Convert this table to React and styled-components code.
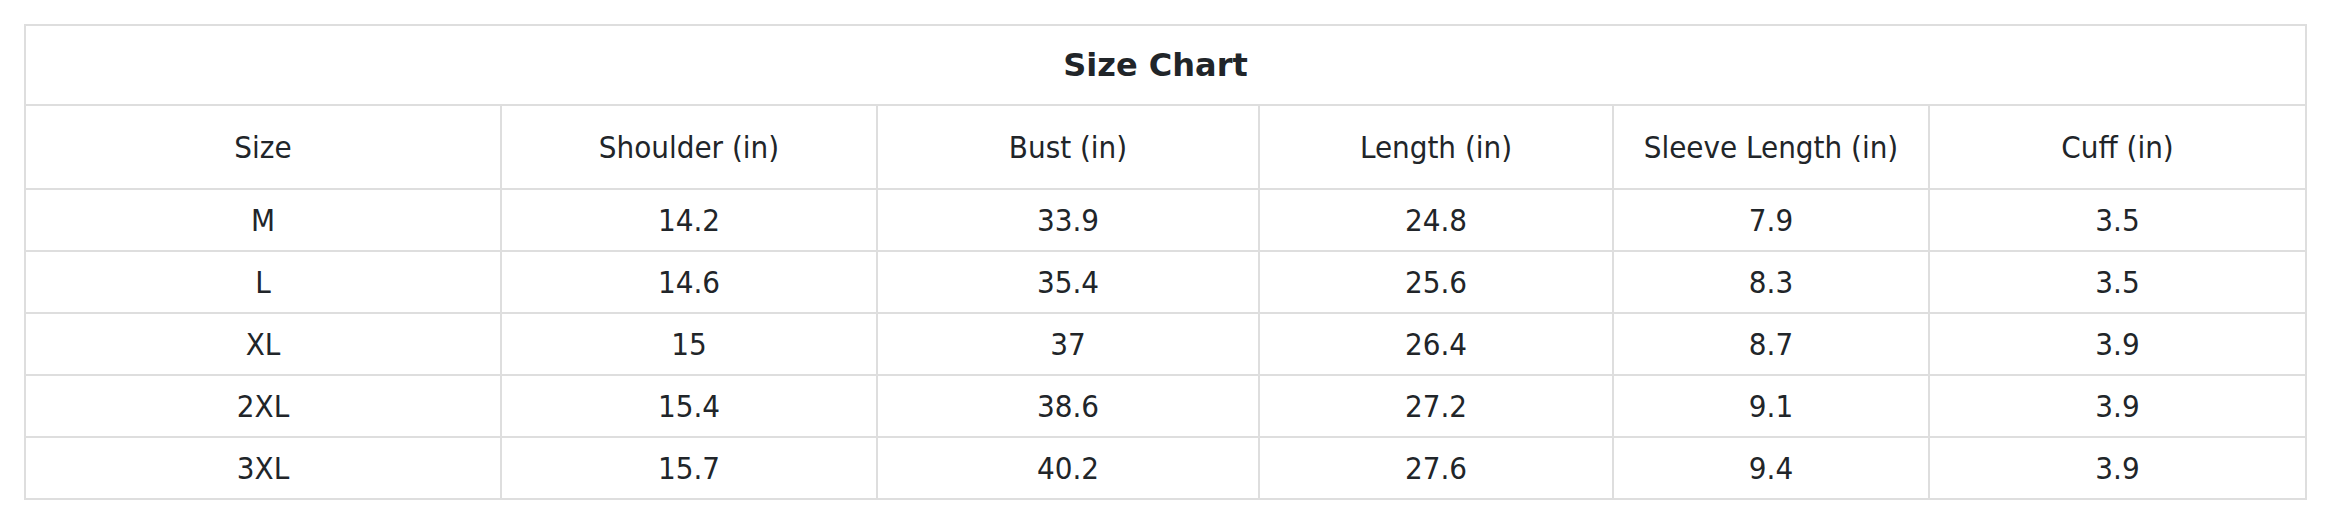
import React from "react";
import styled, { createGlobalStyle } from "styled-components";

const GlobalStyle = createGlobalStyle`
  html, body {
    margin: 0;
    padding: 0;
    background: #ffffff;
  }
  * { box-sizing: border-box; }
`;

const Page = styled.div`
  padding: 24px 0 0 24px;
  background: #ffffff;
  font-family: "DejaVu Sans Condensed", "DejaVu Sans", sans-serif;
  font-stretch: condensed;
  color: #212529;
`;

const Grid = styled.div`
  display: grid;
  grid-template-columns: 476px 376px 382px 354px 316px 377px;
  width: max-content;
  border-top: 2px solid #dedede;
  border-left: 2px solid #dedede;
`;

const Cell = styled.div`
  display: flex;
  align-items: center;
  justify-content: center;
  height: ${(p) => p.$h}px;
  border-right: 2px solid #dedede;
  border-bottom: 2px solid #dedede;
  font-size: 31px;
  font-weight: 400;
  line-height: 1;
  white-space: nowrap;
`;

const TitleCell = styled(Cell)`
  grid-column: 1 / -1;
  padding-right: 20px;
  font-family: "DejaVu Sans", sans-serif;
  font-stretch: normal;
  font-size: 32px;
  font-weight: 700;
`;

const headers = ["Size", "Shoulder (in)", "Bust (in)", "Length (in)", "Sleeve Length (in)", "Cuff (in)"];

const rows = [
  ["M", "14.2", "33.9", "24.8", "7.9", "3.5"],
  ["L", "14.6", "35.4", "25.6", "8.3", "3.5"],
  ["XL", "15", "37", "26.4", "8.7", "3.9"],
  ["2XL", "15.4", "38.6", "27.2", "9.1", "3.9"],
  ["3XL", "15.7", "40.2", "27.6", "9.4", "3.9"],
];

export default function App() {
  return (
    <>
      <GlobalStyle />
      <Page>
        <Grid>
          <TitleCell $h={80}>Size Chart</TitleCell>
          {headers.map((h) => (
            <Cell key={h} $h={84}>{h}</Cell>
          ))}
          {rows.map((r, i) =>
            r.map((v, j) => (
              <Cell key={`${i}-${j}`} $h={62}>{v}</Cell>
            ))
          )}
        </Grid>
      </Page>
    </>
  );
}
